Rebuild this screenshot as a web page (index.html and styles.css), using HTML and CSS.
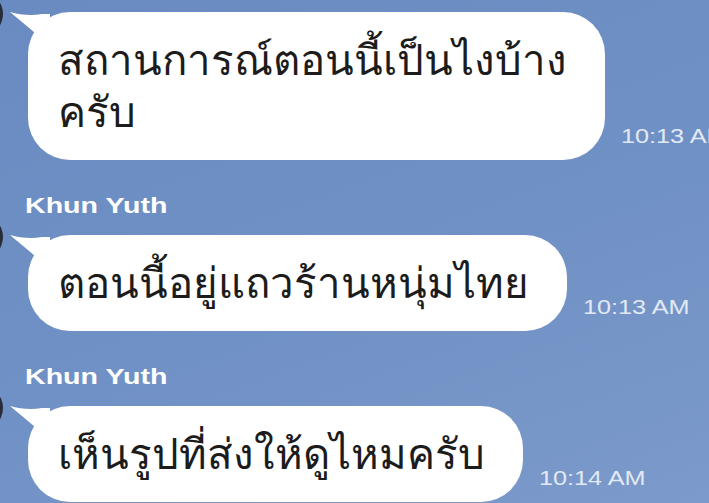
FILE: index.html
```html
<!DOCTYPE html>
<html lang="th">
<head>
  <meta charset="UTF-8" />
  <meta name="viewport" content="width=device-width, initial-scale=1.0"/>
  <title>LINE Chat</title>
  <link rel="stylesheet" href="styles.css">
</head>
<body>
  <div class="chat">

    <div class="msg">
      <div class="row">
        <span class="avatar"></span>
        <div class="bubble">
          <svg class="tail" width="40" height="40" viewBox="0 0 40 40"><path d="M0 0 C10 3 22 4 32 2 L40 2 L40 36 C30 24 14 12 0 0 Z" fill="#fff"/></svg>
          <p>สถานการณ์ตอนนี้เป็นไงบ้าง<br>ครับ</p>
        </div>
        <span class="time">10:13 AM</span>
      </div>
    </div>

    <div class="msg">
      <div class="name"><span>Khun Yuth</span></div>
      <div class="row">
        <span class="avatar"></span>
        <div class="bubble">
          <svg class="tail" width="40" height="40" viewBox="0 0 40 40"><path d="M0 0 C10 3 22 4 32 2 L40 2 L40 36 C30 24 14 12 0 0 Z" fill="#fff"/></svg>
          <p>ตอนนี้อยู่แถวร้านหนุ่มไทย</p>
        </div>
        <span class="time">10:13 AM</span>
      </div>
    </div>

    <div class="msg">
      <div class="name"><span>Khun Yuth</span></div>
      <div class="row">
        <span class="avatar"></span>
        <div class="bubble">
          <svg class="tail" width="40" height="40" viewBox="0 0 40 40"><path d="M0 0 C10 3 22 4 32 2 L40 2 L40 36 C30 24 14 12 0 0 Z" fill="#fff"/></svg>
          <p>เห็นรูปที่ส่งให้ดูไหมครับ</p>
        </div>
        <span class="time">10:14 AM</span>
      </div>
    </div>

  </div>
</body>
</html>
```
FILE: styles.css
```css
* { box-sizing: border-box; }
html, body { height: 100%; }
body {
  margin: 0;
  background: linear-gradient(160deg, #6a8bc1 0%, #7091c5 55%, #7c9acb 100%);
  font-family: 'Noto Sans', 'DejaVu Sans', sans-serif;
  overflow: hidden;
}
.chat {
  display: flex;
  flex-direction: column;
  padding-top: 12px;
  gap: 33px;
}
.msg {
  padding-left: 28px;
}
.name {
  color: #fff;
  font-family: 'Liberation Sans', sans-serif;
  font-weight: bold;
  font-size: 22px;
  line-height: 26px;
  margin: 0 0 16px -3px;
}
.name span {
  display: inline-block;
  transform: scaleX(1.3);
  transform-origin: left center;
}
.row {
  position: relative;
  display: flex;
  align-items: flex-end;
  gap: 16px;
}
.avatar {
  position: absolute;
  left: -71px;
  top: -21px;
  width: 46px;
  height: 46px;
  border-radius: 50%;
  background: #262d38;
}
.bubble {
  position: relative;
  flex: none;
  background: #fff;
  border-radius: 42px;
  padding: 21px 38px 23px 30px;
}
.tail {
  position: absolute;
  left: -18px;
  top: 0;
}
.bubble p {
  margin: 0;
  color: #1c1c1c;
  font-size: 42px;
  line-height: 52px;
  white-space: nowrap;
}
.time {
  flex: none;
  display: inline-block;
  color: #e2e9f4;
  font-family: 'Liberation Sans', sans-serif;
  font-size: 21px;
  line-height: 24px;
  padding-bottom: 12px;
  white-space: nowrap;
  transform: scaleX(1.2);
  transform-origin: left center;
}
```
